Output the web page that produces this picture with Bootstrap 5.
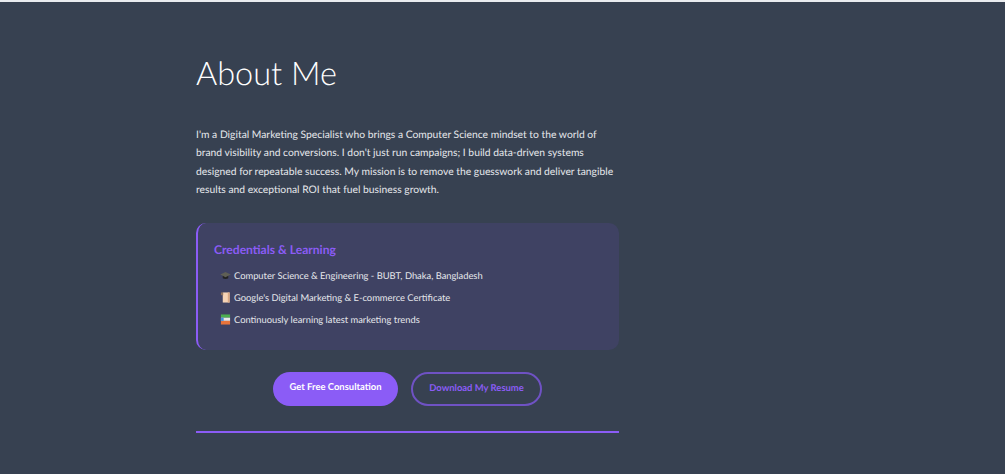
<!DOCTYPE html>
<html lang="en">
  <head>
    <meta charset="UTF-8" />
    <meta name="viewport" content="width=device-width, initial-scale=1.0" />
    <title>About Me</title>
    <link
      href="https://cdn.jsdelivr.net/npm/bootstrap@5.3.3/dist/css/bootstrap.min.css"
      rel="stylesheet"
    />
    <style>
      html, body { height: 100%; overflow: hidden; }
      body {
        background: #374151;
        border-top: 2px solid #e9ecef;
        font-family: Lato, "Open Sans", sans-serif;
        color: #e5e7eb;
        text-rendering: geometricPrecision;
      }
      .about-wrap { width: 423px; margin-left: 196px; padding-top: 49px; }
      .about-title { font-size: 32.5px; font-weight: 300; line-height: 44px; color: #fff; margin-bottom: 31px; }
      .about-text { font-size: 10.32px; line-height: 18.4px; margin-bottom: 23px; }
      .cred-box {
        background: #3f4263;
        border-left: 2px solid #8b5cf6;
        border-radius: 10px;
        padding: 18px 16px 20px;
        height: 127px;
      }
      .cred-title { font-size: 12.1px; font-weight: 700; color: #8b5cf6; line-height: 18px; margin-bottom: 6px; }
      .cred-list { font-size: 9.35px; line-height: 22px; padding-left: 6px; }
      .cred-icon { width: 11px; height: 11px; flex: none; margin-right: -1px; }
      .btn-row { padding-top: 22px; padding-bottom: 25px; gap: 13px; }
      .btn-solid, .btn-line {
        font-size: 9.45px;
        font-weight: 700;
        border-radius: 17px;
        height: 34px;
        line-height: 1;
        padding: 0;
        display: flex;
        align-items: center;
        justify-content: center;
      }
      .btn-solid { width: 125px; background: #8b5cf6; border: 0; color: #fff; padding-bottom: 2px; }
      .btn-solid:hover { background: #8b5cf6; color: #fff; }
      .btn-line { width: 131px; background: transparent; border: 2px solid #6f52c4; color: #8b5cf6; }
      .end-rule { height: 2px; background: #8b5cf6; }
    </style>
  </head>
  <body>
    <div class="about-wrap">
      <h1 class="about-title">About Me</h1>
      <p class="about-text">
        I'm a Digital Marketing Specialist who brings a Computer Science mindset to the world of
        brand visibility and conversions. I don't just run campaigns; I build data-driven systems
        designed for repeatable success. My mission is to remove the guesswork and deliver tangible
        results and exceptional ROI that fuel business growth.
      </p>

      <div class="cred-box">
        <h3 class="cred-title">Credentials &amp; Learning</h3>
        <ul class="list-unstyled mb-0 cred-list">
          <li class="d-flex align-items-center gap-1">
            <svg class="cred-icon" viewBox="0 0 12 12">
              <path d="M3 6v3c1.5 1.2 4.5 1.2 6 0V6z" fill="#232323" />
              <path d="M0.3 5 6 2.2 11.7 5 6 7.8z" fill="#5f5f55" />
            </svg>
            <span>Computer Science &amp; Engineering - BUBT, Dhaka, Bangladesh</span>
          </li>
          <li class="d-flex align-items-center gap-1">
            <svg class="cred-icon" viewBox="0 0 12 12">
              <rect x="3" y="0.5" width="7.5" height="11" fill="#f6d3b5" />
              <rect x="1" y="0.5" width="2.5" height="3" fill="#8f7360" />
              <rect x="8.5" y="0.5" width="2" height="11" fill="#d9a884" />
            </svg>
            <span>Google's Digital Marketing &amp; E-commerce Certificate</span>
          </li>
          <li class="d-flex align-items-center gap-1">
            <svg class="cred-icon" viewBox="0 0 12 12">
              <rect x="1" y="0.5" width="10" height="3.5" fill="#4caf50" />
              <rect x="1" y="4" width="10" height="3.5" fill="#e8e8e8" />
              <rect x="1" y="7.5" width="10" height="4" fill="#e8743b" />
              <rect x="1" y="4" width="3" height="3.5" fill="#4a90d9" />
            </svg>
            <span>Continuously learning latest marketing trends</span>
          </li>
        </ul>
      </div>

      <div class="d-flex justify-content-center btn-row">
        <a class="btn btn-solid" href="#">Get Free Consultation</a>
        <a class="btn btn-line" href="#">Download My Resume</a>
      </div>
      <div class="end-rule"></div>
    </div>
    <script src="https://cdn.jsdelivr.net/npm/bootstrap@5.3.3/dist/js/bootstrap.bundle.min.js"></script>
  </body>
</html>
